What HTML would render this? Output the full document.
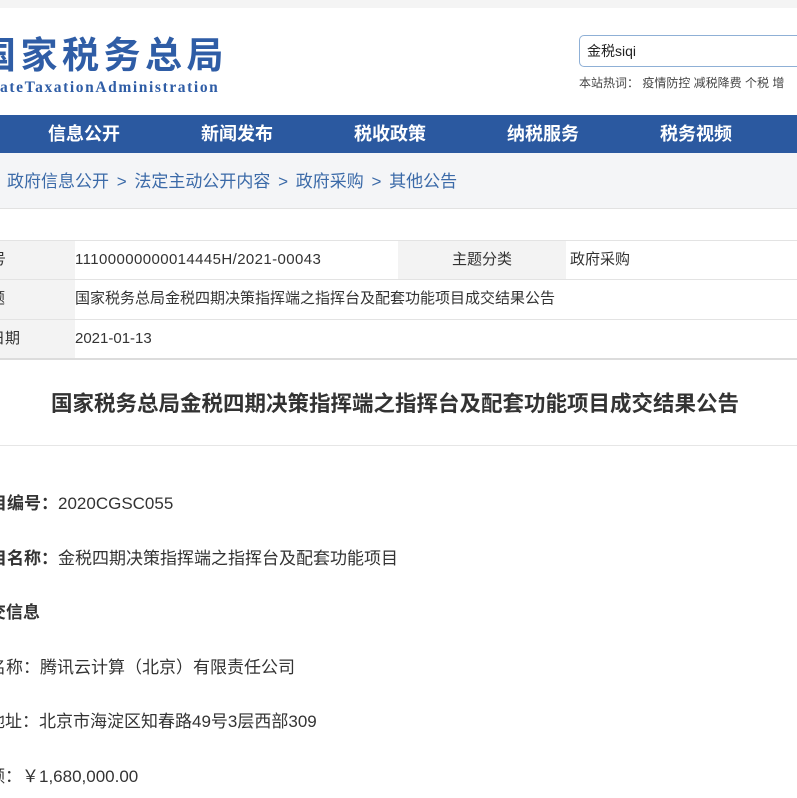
<!DOCTYPE html>
<html><head><meta charset="utf-8"><style>
*{margin:0;padding:0;box-sizing:border-box}
html,body{width:797px;height:798px;overflow:hidden}
body{background:#fff;position:relative;font-family:"Liberation Sans","Noto Sans CJK SC",sans-serif;color:#333}
.a{position:absolute;white-space:nowrap}
</style></head><body>
<div class="a" style="left:0;top:0;width:797px;height:8px;background:#f4f4f4"></div>
<div class="a" style="left:-21px;top:34px;font-size:37px;font-weight:bold;color:#2f5da6;letter-spacing:4.5px;line-height:44px">国家税务总局</div>
<div class="a" style="left:-17px;top:78px;font-family:'Liberation Serif',serif;font-size:15.5px;font-weight:bold;color:#2f5da6;letter-spacing:1.6px;line-height:20px">StateTaxationAdministration</div>
<div class="a" style="left:579px;top:35px;width:218px;height:32px;border:1px solid #8fb0d6;border-right:none;border-radius:5px 0 0 5px;background:#fff"></div>
<div class="a" style="left:587px;top:42px;font-size:14px;line-height:18px;color:#222">金税siqi</div>
<div class="a" style="left:579px;top:75px;font-size:12px;line-height:16px;color:#444">本站热词：&nbsp;疫情防控 减税降费 个税 增</div>
<div class="a" style="left:0;top:115px;width:797px;height:38px;background:#2b59a0"></div>
<div class="a" style="left:48px;top:115px;line-height:38px;font-size:18px;font-weight:bold;color:#fff">信息公开</div>
<div class="a" style="left:201px;top:115px;line-height:38px;font-size:18px;font-weight:bold;color:#fff">新闻发布</div>
<div class="a" style="left:354px;top:115px;line-height:38px;font-size:18px;font-weight:bold;color:#fff">税收政策</div>
<div class="a" style="left:507px;top:115px;line-height:38px;font-size:18px;font-weight:bold;color:#fff">纳税服务</div>
<div class="a" style="left:660px;top:115px;line-height:38px;font-size:18px;font-weight:bold;color:#fff">税务视频</div>
<div class="a" style="left:0;top:153px;width:797px;height:56px;background:#f4f5f7;border-bottom:1px solid #e2e2e2"></div>
<div class="a" style="left:7px;top:171px;font-size:17px;line-height:22px;color:#3b6aa8;word-spacing:3px">政府信息公开 &gt; 法定主动公开内容 &gt; 政府采购 &gt; 其他公告</div>
<div class="a" style="left:0;top:240px;width:797px;height:1px;background:#e3e3e3"></div>
<div class="a" style="left:0;top:241px;width:75px;height:118px;background:#f3f3f3"></div>
<div class="a" style="left:398px;top:241px;width:168px;height:38px;background:#f3f3f3"></div>
<div class="a" style="left:0;top:279px;width:797px;height:1px;background:#e3e3e3"></div>
<div class="a" style="left:0;top:319px;width:797px;height:1px;background:#e3e3e3"></div>
<div class="a" style="left:0;top:358px;width:797px;height:2px;background:#dcdcdc"></div>
<div class="a" style="left:-9px;top:250px;font-size:15px;line-height:20px">号</div>
<div class="a" style="left:75px;top:250px;font-size:15px;line-height:20px;letter-spacing:0.4px">11100000000014445H/2021-00043</div>
<div class="a" style="left:452px;top:250px;font-size:15px;line-height:20px">主题分类</div>
<div class="a" style="left:570px;top:250px;font-size:15px;line-height:20px">政府采购</div>
<div class="a" style="left:-10px;top:289px;font-size:15px;line-height:20px">题</div>
<div class="a" style="left:75px;top:289px;font-size:15px;line-height:20px">国家税务总局金税四期决策指挥端之指挥台及配套功能项目成交结果公告</div>
<div class="a" style="left:-10px;top:329px;font-size:15px;line-height:20px">日期</div>
<div class="a" style="left:75px;top:329px;font-size:15px;line-height:20px">2021-01-13</div>
<div class="a" style="left:51px;top:390px;font-size:21.5px;font-weight:bold;line-height:28px;color:#333">国家税务总局金税四期决策指挥端之指挥台及配套功能项目成交结果公告</div>
<div class="a" style="left:0;top:445px;width:797px;height:1px;background:#e6e6e6"></div>
<div class="a" style="left:-27px;top:492px;font-size:17px;line-height:24px"><b>项目编号：</b>2020CGSC055</div>
<div class="a" style="left:-27px;top:547px;font-size:17px;line-height:24px"><b>项目名称：</b>金税四期决策指挥端之指挥台及配套功能项目</div>
<div class="a" style="left:-28px;top:601px;font-size:17px;line-height:24px"><b>成交信息</b></div>
<div class="a" style="left:-62px;top:656px;font-size:17px;line-height:24px">供应商名称：腾讯云计算（北京）有限责任公司</div>
<div class="a" style="left:-63px;top:710px;font-size:17px;line-height:24px">供应商地址：北京市海淀区知春路49号3层西部309</div>
<div class="a" style="left:-63px;top:765px;font-size:17px;line-height:24px">成交金额：￥1,680,000.00</div>
</body></html>
